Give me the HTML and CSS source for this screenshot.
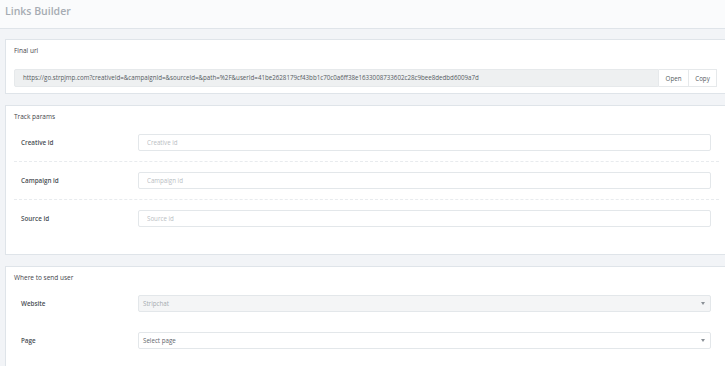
FILE: index.html
```html
<!DOCTYPE html>
<html lang="en">
<head>
  <meta charset="UTF-8">
  <title>Links Builder</title>
  <link rel="stylesheet" href="styles.css">
</head>
<body>

  <div class="page-head">
    <h1>Links Builder</h1>
  </div>

  <div class="content">

    <div class="card">
      <div class="card-title">Final url</div>
      <div class="url-group">
        <div class="url-field">https://go.strpjmp.com?creativeId=&amp;campaignId=&amp;sourceId=&amp;path=%2F&amp;userId=41be2628179cf43bb1c70c0a6ff38e1633008733602c28c9bee8dedbd6009a7d</div>
        <button class="btn">Open</button>
        <button class="btn">Copy</button>
      </div>
    </div>

    <div class="card card-params">
      <div class="card-title">Track params</div>
      <div class="row dashed">
        <label>Creative id</label>
        <input type="text" placeholder="Creative id">
      </div>
      <div class="row dashed">
        <label>Campaign id</label>
        <input type="text" placeholder="Campaign id">
      </div>
      <div class="row">
        <label>Source id</label>
        <input type="text" placeholder="Source id">
      </div>
    </div>

    <div class="card card-target">
      <div class="card-title">Where to send user</div>
      <div class="row">
        <label>Website</label>
        <div class="select disabled">Stripchat<span class="caret"></span></div>
      </div>
      <div class="row">
        <label>Page</label>
        <div class="select">Select page<span class="caret"></span></div>
      </div>
    </div>

  </div>

</body>
</html>
```

FILE: styles.css
```css
html, body { margin: 0; padding: 0; }
body {
  font-family: "Open Sans", "Liberation Sans", sans-serif;
  background: #f2f4f7;
  color: #4a4f55;
  overflow: hidden;
}
.page-head {
  height: 28px;
  background: #fafbfc;
  border-bottom: 1px solid #dfe4e9;
  padding-left: 5px;
}
h1 {
  margin: 0;
  font-size: 10.5px;
  line-height: 22px;
  font-weight: 600;
  color: #a6acb3;
}
.content {
  padding-left: 5px;
  width: 723px;
}
.card {
  background: #fff;
  border: 1px solid #dfe4e9;
  margin-top: 10px;
  padding: 5px 8px 6px 8px;
}
.card-params { margin-top: 11px; padding-bottom: 17px; }
.card-target { padding-bottom: 30px; }
.card + .card { margin-top: 11px; }
.card-title {
  font-size: 6.5px;
  line-height: 12px;
  color: #3f454b;
}
.url-group {
  display: flex;
  margin-top: 12px;
  margin-right: 2px;
  height: 18px;
}
.url-field {
  flex: 1;
  background: #eef0f1;
  border: 1px solid #e6e9eb;
  border-radius: 2px 0 0 2px;
  font-size: 6.2px;
  line-height: 16px;
  padding-left: 8px;
  color: #555b61;
  white-space: nowrap;
  overflow: hidden;
}
.btn {
  font-family: inherit;
  font-size: 6.2px;
  color: #555b61;
  background: #fff;
  border: 1px solid #e6e9eb;
  border-left: none;
  padding: 0;
  width: 30px;
}
.btn:last-child { width: 28px; }
.row {
  display: flex;
  align-items: center;
  padding: 11px 8px 10px 7px;
}
.row.dashed { border-bottom: 1px dashed #e8ebee; }
.row + .row { padding-top: 10px; }
.row label {
  width: 117px;
  font-size: 6.3px;
  font-weight: 600;
  color: #4a4f55;
  margin-top: -1px;
}
.row input, .select {
  flex: 1;
  box-sizing: border-box;
  height: 17px;
  border: 1px solid #e3e7ea;
  border-radius: 2px;
  font-family: inherit;
  font-size: 6.2px;
  padding: 0 8px;
  color: #555b61;
  outline: none;
}
.row input::placeholder { color: #b9bec3; }
.select {
  position: relative;
  line-height: 15px;
  padding-left: 4px;
  background: #fff;
  color: #5f656b;
}
.select.disabled {
  background: #f4f5f6;
  color: #a5abb0;
}
.caret {
  position: absolute;
  right: 5px;
  top: 6px;
  border-left: 2.5px solid transparent;
  border-right: 2.5px solid transparent;
  border-top: 3px solid #8a9096;
}
```
